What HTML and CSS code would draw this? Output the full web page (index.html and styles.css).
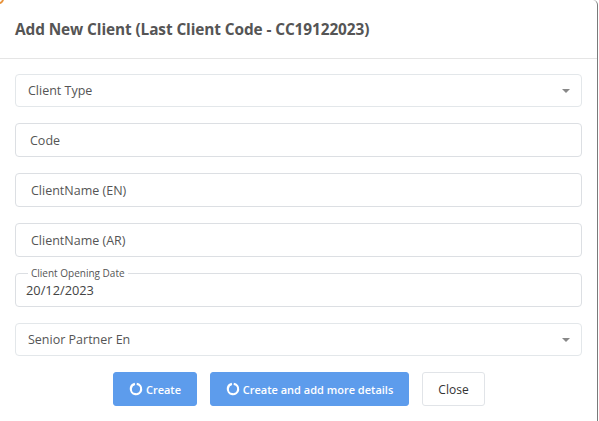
FILE: index.html
```html
<!DOCTYPE html>
<html>
<head>
<meta charset="utf-8">
<link rel="stylesheet" href="styles.css">
</head>
<body>
<div class="backdrop-corner"></div>
<div class="modal">
  <div class="modal-header">
    <h4 class="modal-title">Add New Client (Last Client Code - CC19122023)</h4>
  </div>
  <div class="modal-body">
    <div class="field select"><span class="ph">Client Type</span><span class="caret"></span></div>
    <div class="field"><span class="ph pad2">Code</span></div>
    <div class="field"><span class="ph pad3">ClientName (EN)</span></div>
    <div class="field"><span class="ph pad3">ClientName (AR)</span></div>
    <fieldset class="field date">
      <legend>Client Opening Date</legend>
      <span class="val">20/12/2023</span>
    </fieldset>
    <div class="field select"><span class="ph">Senior Partner En</span><span class="caret"></span></div>
  </div>
  <div class="modal-footer">
    <button class="btn primary"><svg class="spin" width="14" height="14" viewBox="0 0 14 14"><circle cx="7" cy="7" r="5.2" fill="none" stroke="#fff" stroke-width="2.2" stroke-dasharray="30 2.7" transform="rotate(-82 7 7)"/></svg>Create</button>
    <button class="btn primary wide"><svg class="spin" width="14" height="14" viewBox="0 0 14 14"><circle cx="7" cy="7" r="5.2" fill="none" stroke="#fff" stroke-width="2.2" stroke-dasharray="30 2.7" transform="rotate(-82 7 7)"/></svg>Create and add more details</button>
    <button class="btn default">Close</button>
  </div>
</div>
</body>
</html>
```

FILE: styles.css
```css
* { box-sizing: border-box; }
html, body { margin: 0; padding: 0; }
body {
  width: 599px;
  height: 421px;
  background: #fff;
  font-family: "Open Sans", "Noto Sans", sans-serif;
  position: relative;
  overflow: hidden;
}
.backdrop-corner {
  position: absolute;
  left: -6px;
  top: -6px;
  width: 10px;
  height: 10px;
  border-radius: 50%;
  border: 2px solid #e8923a;
}
.modal {
  width: 598px;
  height: 421px;
  background: #fff;
  border-right: 1px solid #7a7a7a;
  border-top-right-radius: 5px;
  display: flex;
  flex-direction: column;
}
.modal-header {
  height: 59px;
  border-bottom: 1px solid #e5e5e5;
  padding: 0 15px;
  display: flex;
  align-items: center;
}
.modal-title {
  margin: 0;
  font-size: 15.4px;
  font-weight: 700;
  color: #555;
  letter-spacing: -0.1px;
}
.modal-body {
  padding: 15px 15px 0 15px;
  display: flex;
  flex-direction: column;
  gap: 16px;
}
.field {
  height: 34px;
  border: 1px solid #dcdfe3;
  border-radius: 4px;
  display: flex;
  align-items: center;
  position: relative;
  font-size: 12.5px;
  color: #555;
  margin: 0;
  padding: 0;
}
.select { border-color: #e3e7ea; height: 33px; }
.ph { padding-left: 12px; }
.ph.pad2 { padding-left: 14px; }
.ph.pad3 { padding-left: 15px; }
.caret {
  position: absolute;
  right: 11px;
  top: 14px;
  width: 0;
  height: 0;
  border-left: 4px solid transparent;
  border-right: 4px solid transparent;
  border-top: 4px solid #888;
}
fieldset.date {
  display: block;
  padding: 0 10px;
  min-width: 0;
  margin-top: -6px;
  height: 40px;
}
fieldset.date legend {
  font-size: 10px;
  color: #555;
  padding: 0 3px;
  margin-left: 2px;
  line-height: 12px;
}
fieldset.date .val {
  display: block;
  font-size: 12.8px;
  color: #444;
  line-height: 16px;
  margin-top: 3px;
}
.modal-footer {
  display: flex;
  justify-content: center;
  gap: 13px;
  padding-top: 16px;
  padding-left: 1px;
}
.btn {
  height: 34px;
  border-radius: 3px;
  font-family: "Open Sans", "Noto Sans", sans-serif;
  font-size: 12px;
  display: inline-flex;
  align-items: center;
  justify-content: center;
  gap: 3px;
  cursor: pointer;
}
.spin { flex: none; }
.primary {
  background: #5d9cec;
  border: 1px solid #5d9cec;
  color: #fff;
  font-weight: 600;
  font-size: 11px;
  width: 84px;
}
.primary.wide { width: 199px; }
.default {
  background: #fff;
  border: 1px solid #e1e4e8;
  color: #333;
  width: 63px;
}
```
